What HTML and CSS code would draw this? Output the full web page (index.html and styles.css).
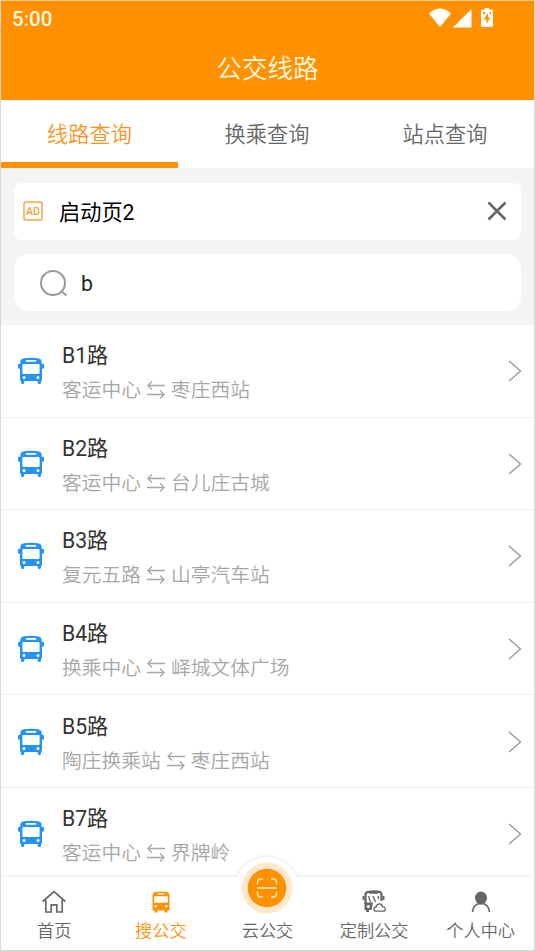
FILE: index.html
```html
<!DOCTYPE html>
<html lang="zh-CN">
<head>
<meta charset="utf-8">
<title>公交线路</title>
<link rel="stylesheet" href="styles.css">
</head>
<body>
<svg class="defs" width="0" height="0">
  <symbol id="bus" viewBox="0 0 26 28">
    <path fill="currentColor" fill-rule="evenodd" d="M6 1.200Q13 .2 20 1.200Q23.300 1.800 23.600 4.500V6.800H24.600Q26 6.800 26 8V10.500Q26 11.800 24.600 11.800H24V22.500Q24 23.600 23 24V25.500Q23 27 21.300 27Q19.700 27 19.700 25.500V24H6.300V25.500Q6.300 27 4.700 27Q3 27 3 25.500V24Q2 23.600 2 22.500V11.800H1.400Q0 11.800 0 10.500V8Q0 6.800 1.400 6.800H2.400V4.500Q2.700 1.800 6 1.200ZM8.300 3Q7.700 3 7.700 3.900T8.300 4.800H17.700Q18.300 4.800 18.300 3.900T17.700 3ZM5.300 7Q4.400 7 4.400 8V16Q4.400 17 5.300 17H20.700Q21.600 17 21.600 16V8Q21.600 7 20.700 7ZM6 19A1.500 1.500 0 1 0 6 22A1.500 1.500 0 1 0 6 19ZM20 19A1.500 1.500 0 1 0 20 22A1.500 1.500 0 1 0 20 19Z"/>
  </symbol>
  <symbol id="swap" viewBox="0 0 20 20">
    <path fill="none" stroke="currentColor" stroke-width="1.300" d="M19 5.500H2M6 1.500L2 5.500L6 9.500M1 14.500H18M14 10.500L18 14.500L14 18.500"/>
  </symbol>
  <symbol id="chev" viewBox="0 0 14 22">
    <path fill="none" stroke="currentColor" stroke-width="1.400" d="M1 1L12.500 11L1 21"/>
  </symbol>
</svg>
<div class="app">
  <header class="header">
    <div class="status">
      <span>5:00</span>
      <svg class="status-icons" viewBox="0 0 68 22" fill="#fff">
        <path d="M0 5.500Q11-4.500 22 5.500L11 19ZM42.500 1V19.500H24Z"/>
        <path fill-rule="evenodd" d="M56 0H60V1.500H62.500Q64 1.500 64 3V17.500Q64 19 62.500 19H53.500Q52 19 52 17.500V3Q52 1.500 53.500 1.500H56ZM59 5L54.500 11.500H57.500V16L61.500 9.500H59ZM54 4V6H56V4ZM60.500 4V6H62V4Z"/>
      </svg>
    </div>
    <h1 class="title">公交线路</h1>
  </header>
  <nav class="tabs">
    <div class="tab tab-on">线路查询</div>
    <div class="tab">换乘查询</div>
    <div class="tab">站点查询</div>
  </nav>
  <section class="search-area">
    <div class="card notice">
      <svg class="ad" viewBox="0 0 20 20"><rect x="1" y="1" width="18" height="18" rx="2" fill="none" stroke="#f5a54a" stroke-width="1.500"/><text x="10" y="13.600" text-anchor="middle">AD</text></svg>
      <span>启动页2</span>
      <svg class="close" viewBox="0 0 20 20"><path d="M1.500 1.500L18.500 18.500M18.500 1.500L1.500 18.500" fill="none" stroke="#666" stroke-width="2.600"/></svg>
    </div>
    <div class="card search">
      <svg class="lens" viewBox="0 0 28 28"><circle cx="13" cy="13" r="12" fill="none" stroke="#999" stroke-width="2"/><path d="M21 21L26.500 25.500" stroke="#999" stroke-width="2"/></svg>
      <span>b</span>
    </div>
  </section>
  <main class="list">
    <article class="row"><svg class="bus"><use href="#bus"/></svg><div class="info"><div class="name">B1路</div><div class="ends">客运中心<svg class="swap"><use href="#swap"/></svg>枣庄西站</div></div><svg class="chev"><use href="#chev"/></svg></article>
    <article class="row"><svg class="bus"><use href="#bus"/></svg><div class="info"><div class="name">B2路</div><div class="ends">客运中心<svg class="swap"><use href="#swap"/></svg>台儿庄古城</div></div><svg class="chev"><use href="#chev"/></svg></article>
    <article class="row"><svg class="bus"><use href="#bus"/></svg><div class="info"><div class="name">B3路</div><div class="ends">复元五路<svg class="swap"><use href="#swap"/></svg>山亭汽车站</div></div><svg class="chev"><use href="#chev"/></svg></article>
    <article class="row"><svg class="bus"><use href="#bus"/></svg><div class="info"><div class="name">B4路</div><div class="ends">换乘中心<svg class="swap"><use href="#swap"/></svg>峄城文体广场</div></div><svg class="chev"><use href="#chev"/></svg></article>
    <article class="row"><svg class="bus"><use href="#bus"/></svg><div class="info"><div class="name">B5路</div><div class="ends">陶庄换乘站<svg class="swap"><use href="#swap"/></svg>枣庄西站</div></div><svg class="chev"><use href="#chev"/></svg></article>
    <article class="row"><svg class="bus"><use href="#bus"/></svg><div class="info"><div class="name">B7路</div><div class="ends">客运中心<svg class="swap"><use href="#swap"/></svg>界牌岭</div></div><svg class="chev"><use href="#chev"/></svg></article>
  </main>
  <footer class="dock">
    <div class="item"><svg class="ico" viewBox="0 0 24 24"><path d="M.7 11.500L12 1.700L23.300 11.500M3.800 10V22H9.200V14.800H14.800V22H20.200V10" fill="none" stroke="#666" stroke-width="1.700"/></svg><span>首页</span></div>
    <div class="item item-on"><svg class="ico" viewBox="0 0 24 24"><path fill="currentColor" fill-rule="evenodd" d="M6 2Q12 .8 18 2Q20.500 2.300 20.500 5V20.500H18.500V22.500H15.500V20.500H8.500V22.500H5.500V20.500H3.500V5Q3.500 2.300 6 2ZM8.500 3.200V4.600H15.500V3.200ZM5.200 6.200V12.800H18.800V6.200ZM6.800 15A1.300 1.300 0 1 0 6.800 17.600A1.300 1.300 0 1 0 6.800 15ZM17.200 15A1.300 1.300 0 1 0 17.200 17.600A1.300 1.300 0 1 0 17.200 15Z"/></svg><span>搜公交</span></div>
    <div class="item item-mid"><div class="halo"></div><svg class="scan" viewBox="0 0 52 52"><circle cx="26" cy="26" r="25.500" fill="#ffe8cc"/><circle cx="26" cy="26" r="19.300" fill="#ff9100"/><path d="M16.500 22.500V20.500Q16.500 17 20 17H22M30 17H32Q35.500 17 35.500 20.500V22.500M16.500 29.500V31.500Q16.500 35 20 35H22M30 35H32Q35.500 35 35.500 31.500V29.500M16.500 26H35.500" fill="none" stroke="#fff0c8" stroke-width="1.400"/></svg><span>云公交</span></div>
    <div class="item"><svg class="ico" viewBox="0 0 24 24"><path d="M3.500 14V5Q3.500 2 6.500 1.800Q12 .7 17.500 1.800Q19.500 2.200 19.500 5V11" fill="none" stroke="#666" stroke-width="2.200"/><path d="M7 2.800H16M1.500 6V10M21.500 6V10" stroke="#666" stroke-width="2"/><path d="M6.500 6L8.500 12M11 6L13.500 12M16 6L17 9" stroke="#666" stroke-width="1.300"/><path d="M2.500 12.500H11L9.500 20H7V22H4V20H2.500Z" fill="#666"/><circle cx="6.300" cy="16.400" r="1.500" fill="#fff"/><path d="M14 21.200Q11.500 21.200 11.800 18.600Q12.200 17 14 17Q14.800 13.800 17.500 13.800Q20.200 14 20.500 16.700Q23.300 16.500 23.300 19Q23.300 21.200 21 21.200Z" fill="#fff" stroke="#666" stroke-width="1.300"/></svg><span>定制公交</span></div>
    <div class="item"><svg class="ico" viewBox="0 0 24 24"><ellipse cx="12" cy="8" rx="6" ry="6.500" fill="#666"/><path d="M3.500 22Q4.500 13.500 12 13.500T20.500 22" fill="none" stroke="#666" stroke-width="1.700"/></svg><span>个人中心</span></div>
  </footer>
</div>
</body>
</html>
```
FILE: styles.css
```css
* { box-sizing: border-box; }
body { margin: 0; font-family: Roboto, "Noto Sans CJK SC", sans-serif; }
.defs { position: absolute; }
.app {
  display: flex; flex-direction: column;
  width: 535px; height: 951px; overflow: hidden;
  border: 1px solid #d8d6d6; border-top-color: #f3c98d;
  background: #fff;
}
svg { display: block; flex: none; }
.header { height: 99px; flex: none; background: #ff9100; color: #fff; }
.status {
  display: flex; justify-content: space-between; height: 34px;
  padding: 7px 37px 0 11px; font-size: 20.500px; line-height: 22px; font-weight: 500; color: #fff8e0;
}
.status-icons { width: 68px; height: 22px; }
.title {
  margin: 0; height: 65px; text-align: center; color: #fff8e0;
  font-size: 25.600px; line-height: 68px; font-weight: 350;
}
.tabs { display: flex; flex: none; height: 68px; font-weight: 350; }
.tab {
  flex: 1; text-align: center; font-size: 21.200px; line-height: 70px; color: #666;
  border-bottom: 6px solid transparent;
}
.tab-on { flex: 0 0 177px; color: #f7941d; border-bottom-color: #ff9100; }
.search-area {
  display: flex; flex-direction: column; gap: 14px; flex: none;
  height: 157px; padding: 15px 13px 14px; background: #f4f4f4;
}
.card { display: flex; align-items: center; flex: 1; background: #fff; font-size: 21.200px; }
.notice { border-radius: 7px; padding: 0 14px 2px 9px; gap: 16px; color: #000; }
.search { border-radius: 15px; padding: 2px 0 0 26px; gap: 13px; color: #222; }
.ad { width: 20px; height: 20px; }
.ad text { font: 500 10.500px Roboto, sans-serif; fill: #f39a38; }
.close { width: 20px; height: 20px; margin-left: auto; }
.lens { width: 28px; height: 28px; }
.list { flex: 1; min-height: 0; overflow: hidden; }
.row {
  display: flex; align-items: center; height: 92.600px;
  padding: 1px 12px 0 17px; border-bottom: 1px solid #efefef;
}
.bus { width: 26px; height: 28px; color: #2592f5; }
.info { flex: 1; padding: 6px 0 0 18px; }
.name { font-size: 21.200px; line-height: 34px; color: #333; }
.ends {
  display: flex; align-items: center; font-size: 19.750px; line-height: 36px;
  font-weight: 350; color: #a6a6a6;
}
.swap { width: 20px; height: 20px; margin: 0 5px 2px; }
.chev { width: 14px; height: 22px; color: #999; }
.dock {
  position: relative; display: flex; flex: none; height: 73px;
  background: #fff; box-shadow: 0 0 4px rgba(0, 0, 0, .12);
  font-size: 17.200px; font-weight: 350; color: #666;
}
.item {
  position: relative; flex: 1; display: flex; flex-direction: column; align-items: center;
  padding-top: 13px;
}
.item span { position: relative; line-height: 24px; margin-top: 5px; white-space: nowrap; }
.item-on { color: #ff9100; }
.ico { width: 24px; height: 24px; }
.item-mid { padding-top: 42px; }
.item-mid span { margin-top: 0; }
.halo {
  position: absolute; top: -20px; width: 64px; height: 64px; border-radius: 50%;
  background: #fff; box-shadow: 0 0 4px rgba(0, 0, 0, .12); clip-path: inset(-6px -6px 44px -6px);
}
.item-mid::before {
  content: ""; position: absolute; top: -20px; width: 64px; height: 64px; border-radius: 50%;
  background: #fff;
}
.scan { position: absolute; top: -15px; width: 52px; height: 52px; }
```
